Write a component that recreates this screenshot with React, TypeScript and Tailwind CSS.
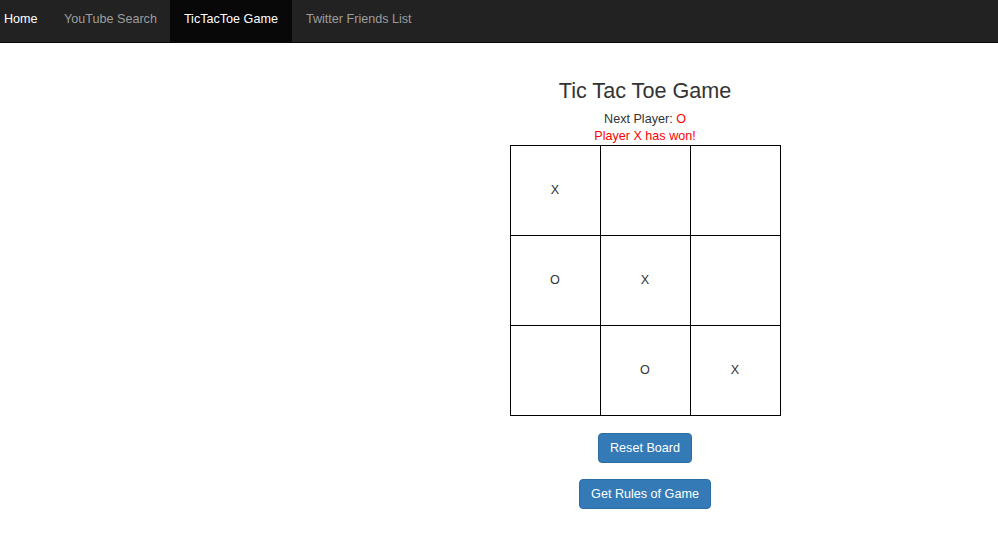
import React from 'react'

const cells = ['X', '', '', 'O', 'X', '', '', 'O', 'X']

const navItems = [
  { label: 'YouTube Search', active: false },
  { label: 'TicTacToe Game', active: true },
  { label: 'Twitter Friends List', active: false },
]

const App = () => {
  return (
    <div className="min-h-[533px] bg-white text-[12.6px] text-[#333] font-['Liberation_Sans',Arial,sans-serif]">
      <nav className="flex h-[43px] bg-[#222] border-b border-[#080808]">
        <a className="flex items-center pb-[4px] pl-[4px] pr-[13px] w-[50px] text-white">Home</a>
        {navItems.map((item) => (
          <a
            key={item.label}
            className={
              item.active
                ? 'flex items-center pb-[4px] px-[14px] bg-[#080808] text-white'
                : 'flex items-center pb-[4px] pl-[14px] pr-[13px] text-[#9d9d9d]'
            }
          >
            {item.label}
          </a>
        ))}
      </nav>

      <div className="flex">
        <div className="w-[292px] shrink-0" />
        <div className="flex-1 flex flex-col items-center">
          <h1 className="mt-[34px] text-[21.6px] leading-[28px] text-[#333]">Tic Tac Toe Game</h1>
          <p className="mt-[6px] leading-[17px]">
            Next Player: <span className="text-[#f00]">O</span>
          </p>
          <p className="leading-[17px] text-[#f00]">Player X has won!</p>
          <div className="grid grid-cols-[repeat(3,90px)] border-l border-t border-black">
            {cells.map((c, i) => (
              <div
                key={i}
                className="w-[90px] h-[90px] flex items-center justify-center border-r border-b border-black"
              >
                {c}
              </div>
            ))}
          </div>
          <button className="mt-[17px] h-[30px] px-[11px] rounded-[4px] bg-[#337ab7] border border-[#2e6da4] text-white">
            Reset Board
          </button>
          <button className="mt-[16px] h-[30px] px-[11px] rounded-[4px] bg-[#337ab7] border border-[#2e6da4] text-white">
            Get Rules of Game
          </button>
        </div>
      </div>
    </div>
  )
}

export default App
